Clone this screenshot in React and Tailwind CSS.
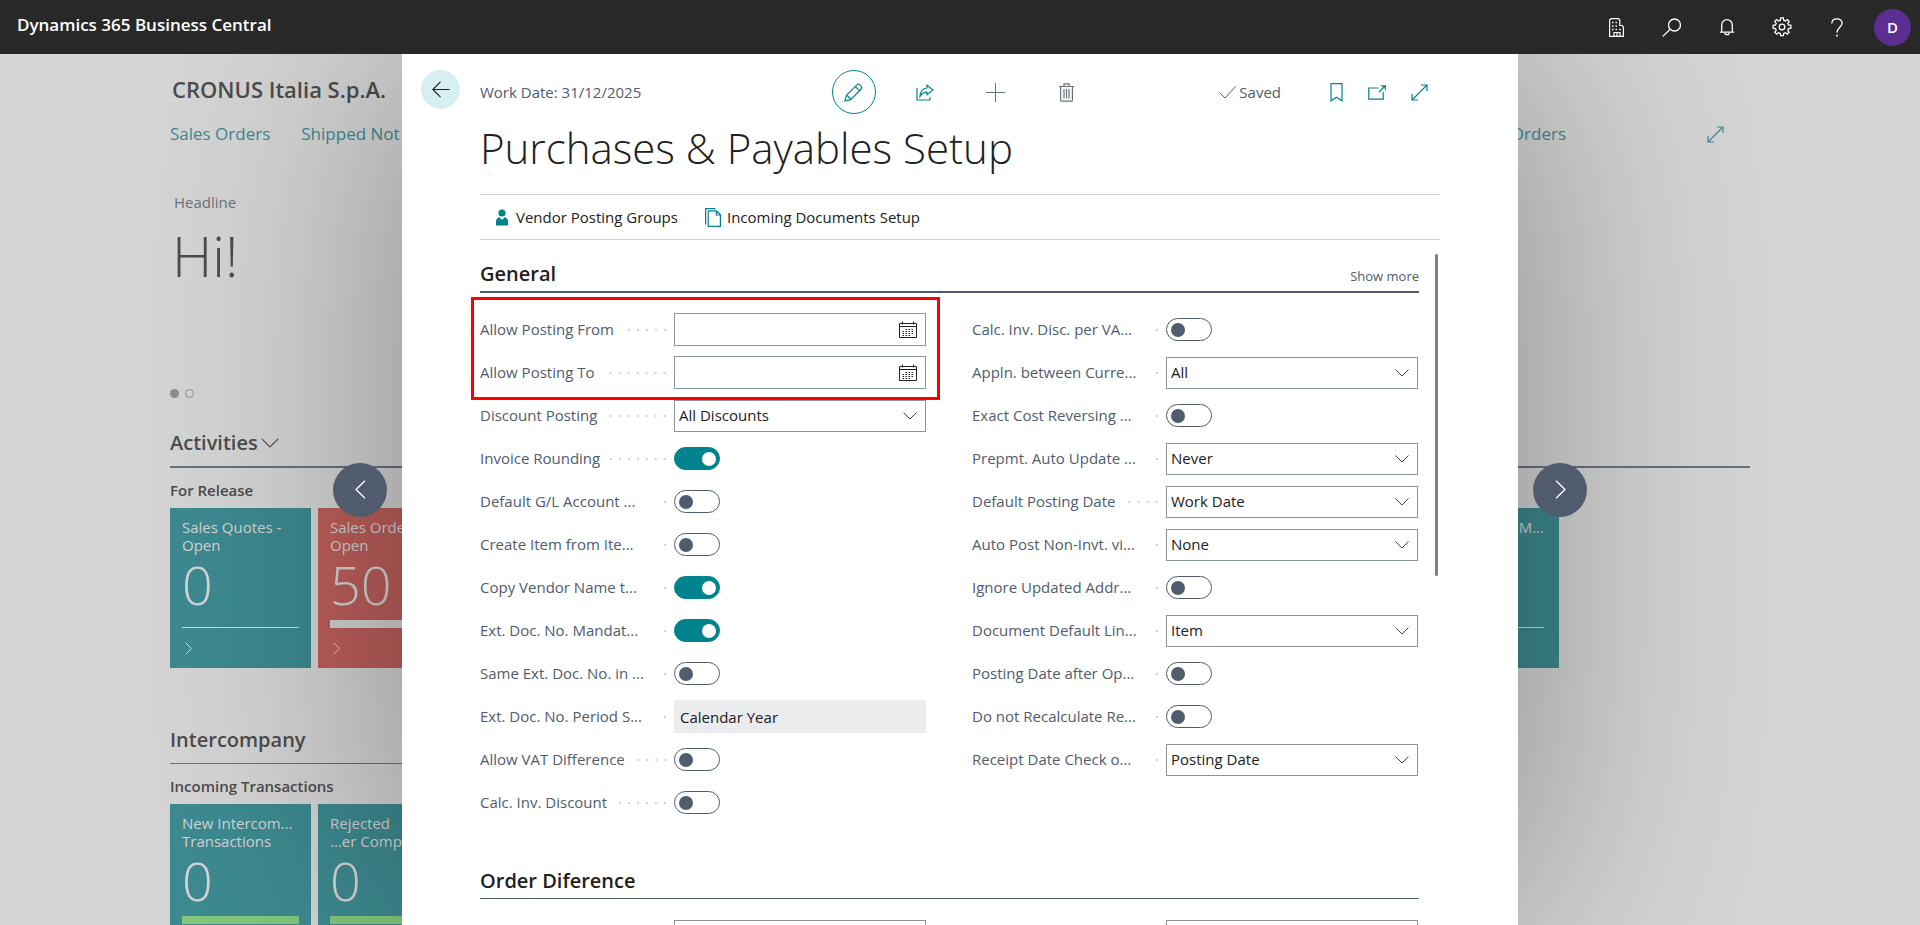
import { useState } from 'react'

const leftFields = [
  { id: 'discount', label: 'Discount Posting', type: 'select', value: 'All Discounts' },
  { id: 'rounding', label: 'Invoice Rounding', type: 'switch', on: true },
  { id: 'gl', label: 'Default G/L Account ...', type: 'switch' },
  { id: 'create', label: 'Create Item from Ite...', type: 'switch' },
  { id: 'copy', label: 'Copy Vendor Name t...', type: 'switch', on: true },
  { id: 'extdoc', label: 'Ext. Doc. No. Mandat...', type: 'switch', on: true },
  { id: 'same', label: 'Same Ext. Doc. No. in ...', type: 'switch' },
  { id: 'period', label: 'Ext. Doc. No. Period S...', type: 'readonly', value: 'Calendar Year' },
  { id: 'vat', label: 'Allow VAT Difference', type: 'switch' },
  { id: 'calc', label: 'Calc. Inv. Discount', type: 'switch' },
]

const rightFields = [
  { id: 'disc', label: 'Calc. Inv. Disc. per VA...', type: 'switch' },
  { id: 'appln', label: 'Appln. between Curre...', type: 'select', value: 'All' },
  { id: 'exact', label: 'Exact Cost Reversing ...', type: 'switch' },
  { id: 'prepmt', label: 'Prepmt. Auto Update ...', type: 'select', value: 'Never' },
  { id: 'defdate', label: 'Default Posting Date', type: 'select', value: 'Work Date' },
  { id: 'autopost', label: 'Auto Post Non-Invt. vi...', type: 'select', value: 'None' },
  { id: 'ignore', label: 'Ignore Updated Addr...', type: 'switch' },
  { id: 'docline', label: 'Document Default Lin...', type: 'select', value: 'Item' },
  { id: 'after', label: 'Posting Date after Op...', type: 'switch' },
  { id: 'recalc', label: 'Do not Recalculate Re...', type: 'switch' },
  { id: 'receipt', label: 'Receipt Date Check o...', type: 'select', value: 'Posting Date' },
]

function Icon({ w = 18, h = 18, sw = 1, className, children }) {
  return (
    <svg width={w} height={h} viewBox={`0 0 ${w} ${h}`} fill="none" stroke="currentColor" strokeWidth={sw} className={className} aria-hidden="true">
      {children}
    </svg>
  )
}

const BuildingIcon = () => (
  <Icon w={15} h={19} sw={1.2}>
    <path d="M.6 18.4V2L2 .6h7.5L10.800 2v5.500h2.200l1.400 1.400v9.500z" />
    <path d="M5 18v-3.500h6V18M8 14.500V18" />
    <path d="M3 4.600h1.500M6.500 4.600H8M3 8h1.500M6.500 8H8M3 11.400h1.500M6.500 11.400H8M10.300 11.400h1.500" strokeWidth="1.500" />
  </Icon>
)

const SearchIcon = () => (
  <Icon w={20} h={19} sw={1.3}>
    <circle cx="12.500" cy="7" r="6" />
    <path d="M8.200 11.200L.8 18.400" />
  </Icon>
)

const BellIcon = () => (
  <Icon w={16} h={18} sw={1.3}>
    <path d="M2.700 14V7a5.300 5.300 0 0110.600 0v7M.8 14.200h14.400" />
    <path d="M5.800 14.500a2.200 2.200 0 004.400 0" />
  </Icon>
)

const GearIcon = () => (
  <Icon w={20} h={20} sw={1.3}>
    <path d="M8.300 3.200l.4-2.300h2.600l.4 2.300 1.700.7 1.900-1.400 1.900 1.900-1.400 1.900.7 1.700 2.400.4v2.800l-2.400.4-.7 1.700 1.400 1.900-1.900 1.900-1.900-1.400-1.700.7-.4 2.300H8.700l-.4-2.300-1.700-.7-1.900 1.400-1.900-1.900 1.400-1.900-.7-1.700-2.400-.4V8.400L3.500 8l.7-1.700-1.400-1.900 1.900-1.900 1.900 1.400z" />
    <circle cx="10" cy="10" r="2.800" />
  </Icon>
)

const HelpIcon = () => (
  <Icon w={12} h={19} sw={1.3}>
    <path d="M.8 5.500C.9 2.600 3.100.8 6 .8s5.100 1.800 5.100 4.500c0 3.700-5.100 4.300-5.100 9.200" />
    <path d="M5.200 17.600h1.600" strokeWidth="1.600" />
  </Icon>
)

const ExpandIcon = () => (
  <Icon w={17} h={17} sw={1.2}>
    <path d="M1 16L16 1M10 1h6v6M1 10v6h6" />
  </Icon>
)

const ChevronDown = ({ className }) => (
  <Icon w={14} h={8} className={className}>
    <path d="M.5.500L7 7 13.500.500" />
  </Icon>
)

const CalendarIcon = ({ className }) => (
  <Icon w={18} h={17} className={className}>
    <path d="M.5 2.500h17v14H.5zM.5 5.500h17M3.500.500v3M14.500.500v3" />
    <path d="M6.500 8.500h9M3.500 10.500h12M3.500 12.500h12M3.500 14.500h9" strokeWidth="1.200" strokeDasharray="1.500 1.500" />
  </Icon>
)

function Switch({ id, on }) {
  const [checked, setChecked] = useState(!!on)
  return (
    <input
      id={id}
      type="checkbox"
      role="switch"
      checked={checked}
      onChange={e => setChecked(e.target.checked)}
      className="flex h-[23px] w-[46px] appearance-none items-center rounded-full border border-[#505c6d] bg-white before:ml-1 before:size-[14px] before:rounded-full before:bg-[#505c6d] before:content-[''] checked:border-[#00838f] checked:bg-[#00838f] checked:before:ml-[27px] checked:before:bg-white"
    />
  )
}

function Control({ field }) {
  if (field.type === 'switch') return <Switch id={field.id} on={field.on} />
  if (field.type === 'readonly') {
    return <input id={field.id} readOnly value={field.value} className="h-[33px] w-full bg-[#ebecee] px-[6px] text-[#212121]" />
  }
  if (field.type === 'date') {
    return (
      <div className="relative">
        <input id={field.id} type="text" className="h-[33px] w-full border border-[#8a93a0] bg-white px-1 text-[#212121]" />
        <CalendarIcon className="pointer-events-none absolute top-2 right-[9px] text-[#212121]" />
      </div>
    )
  }
  return (
    <div className="relative">
      <select id={field.id} className="h-8 w-full appearance-none border border-[#8a93a0] bg-white px-1 text-[#212121]">
        <option>{field.value}</option>
      </select>
      <ChevronDown className="pointer-events-none absolute top-3 right-[9px] text-[#444]" />
    </div>
  )
}

function Field({ field }) {
  const long = field.label.endsWith('...')
  return (
    <div className="flex h-[43px] items-center">
      <div className="flex w-[194px] shrink-0 items-center pr-2">
        <label htmlFor={field.id} className={`whitespace-nowrap ${long ? 'min-w-[178px]' : 'pr-[10px]'}`}>
          {field.label}
        </label>
        {/* dotted leader between the caption and its control */}
        <span className="h-[2px] flex-1 bg-[linear-gradient(to_right,transparent_7px,#d3d3d3_7px)] bg-[length:9px_2px] bg-right bg-repeat-x" />
      </div>
      <div className="min-w-0 flex-1">
        <Control field={field} />
      </div>
    </div>
  )
}

function Tile({ lines, value, bar, color = 'bg-[#3d8b91]', align = '' }) {
  return (
    <a href="#" className={`flex h-40 w-[141px] shrink-0 flex-col px-3 pt-[10px] text-[15px] leading-[18px] text-[#d6d6d6] ${color} ${align}`}>
      {lines.map(l => <span key={l} className="whitespace-nowrap">{l}</span>)}
      <span className="mt-1 mb-1 h-[52px] text-[54px] leading-[52px] font-light">{value}</span>
      <span className="flex h-[14px] items-end">
        <span className={`w-full ${bar}`} />
      </span>
      <Icon w={8} h={13} className="mt-[14px] ml-[3px]">
        <path d="M.8.800l5.700 5.700L.8 12.200" />
      </Icon>
    </a>
  )
}

function RoleCenter() {
  return (
    <div className="mx-[170px] text-[#4d4d4d]" aria-hidden="true">
      <h2 className="mt-5 ml-[2px] text-[22px] leading-[30px] font-semibold">CRONUS Italia S.p.A.</h2>
      <nav className="mt-[17px] flex items-center text-[17px] leading-[26px] text-[#3d8b91]">
        <a href="#" className="mr-[31px]">Sales Orders</a>
        <a href="#">Shipped Not Invoiced</a>
        <a href="#" className="ml-auto mr-[141px]">Orders</a>
        <a href="#" className="mr-[26px]" aria-label="Expand"><ExpandIcon /></a>
      </nav>
      <p className="mt-[43px] ml-1 text-[15px] leading-[24px] text-[#6c737c]">Headline</p>
      <p className="mt-[9px] ml-[2px] text-[56px] leading-[64px] font-light">Hi!</p>
      <div className="mt-[102px] flex gap-[6px]">
        <span className="size-[9px] rounded-full bg-[#8a9099]" />
        <span className="size-[9px] rounded-full border border-[#8a9099]" />
      </div>
      <h3 className="mt-[30px] flex items-center gap-[3px] border-b-2 border-[#6b727d] pb-[9px] text-[20px] leading-[29px] font-semibold">
        Activities
        <Icon w={18} h={10} sw={1.2}><path d="M.800.800L9 9 17.200.800" /></Icon>
      </h3>
      <h4 className="mt-[10px] text-[15px] leading-[24px] font-semibold">For Release</h4>
      <div className="mt-[6px] flex gap-[7px] pr-[191px]">
        <Tile lines={['Sales Quotes -', 'Open']} value="0" bar="h-px bg-[#d6d6d6]" />
        <Tile lines={['Sales Orders -', 'Open']} value="50" bar="h-2 bg-[#d6d6d6]" color="bg-[#bf605c]" />
        <div className="ml-auto">
          <Tile lines={['M...', '\u00a0']} value={'\u00a0'} bar="h-px bg-[#d6d6d6]" align="pr-[15px] text-right" />
        </div>
      </div>
      <div className="mt-[57px] w-1/2">
        <h3 className="border-b border-[#6b727d] pb-[9px] text-[20px] leading-[29px] font-semibold">Intercompany</h3>
        <h4 className="mt-[10px] text-[15px] leading-[24px] font-semibold">Incoming Transactions</h4>
        <div className="mt-[6px] flex gap-[7px]">
          <Tile lines={['New Intercom...', 'Transactions']} value="0" bar="h-2 bg-[#84c77c]" />
          <Tile lines={['Rejected', '...er Comp...']} value="0" bar="h-2 bg-[#84c77c]" />
        </div>
      </div>
    </div>
  )
}

function PageArrow({ label, d }) {
  return (
    <button aria-label={label} className="z-10 flex size-[54px] shrink-0 items-center justify-center rounded-full bg-[#505c6d] text-white">
      <Icon w={11} h={19} sw={1.3}><path d={d} /></Icon>
    </button>
  )
}

function Toolbar() {
  return (
    <div className="flex pt-4">
      <div className="w-[78px] shrink-0 pl-[19px]">
        <button aria-label="Back" className="flex size-[39px] items-center justify-center rounded-full bg-[#d8eff1] text-[#212121]">
          <Icon w={18} h={17} sw={1.2}><path d="M17.500 8.500H1M8.500.800L.8 8.500l7.700 7.700" /></Icon>
        </button>
      </div>
      <div className="grid h-11 flex-1 grid-cols-[1fr_auto_1fr] items-center">
        <span>Work Date: 31/12/2025</span>
        <div className="flex gap-[27px] text-[#00838f]">
          <button aria-label="Edit" className="flex size-11 items-center justify-center rounded-full border border-[#00838f]">
            <Icon w={19} h={19} sw={1.2}>
              <path d="M1 18l1.400-5.600L13 1.800a2 2 0 012.900 0l1.300 1.300a2 2 0 010 2.900L6.600 16.600zM11.300 3.500l4.200 4.200M2.400 12.400q2 0 2.100 2.100 2 0 2.100 2.100" />
            </Icon>
          </button>
          <button aria-label="Share" className="flex size-11 items-center justify-center">
            <Icon w={18} h={17} sw={1.2}>
              <path d="M1 4v12h13v-3" />
              <path d="M11 1.300L17 6l-6 4.700V8.200c-3 0-5 1-7 4.100.3-4.800 2.800-8 7-8.300z" />
            </Icon>
          </button>
          <button aria-label="New" className="flex size-11 items-center justify-center text-[#69717d]">
            <Icon w={19} h={19}><path d="M9.500 0v19M0 9.500h19" /></Icon>
          </button>
          <button aria-label="Delete" className="flex size-11 items-center justify-center text-[#69717d]">
            <Icon w={15} h={19} sw={1.2}>
              <path d="M0 3.500h15M5 3V.8h5V3M1.600 3.500v13.700q0 1 1 1h9.800q1 0 1-1V3.500M5 6v9.500M7.500 6v9.500M10 6v9.500" />
            </Icon>
          </button>
        </div>
        <div className="flex items-center justify-end pr-[12px] text-[#00838f]">
          <span className="mr-[49px] flex items-center gap-[3px] text-[#505c6d]">
            <Icon w={17} h={13}><path d="M.5 6.500l5.500 5.500L16.500.500" /></Icon>
            Saved
          </span>
          <button aria-label="Bookmark" className="mr-[25px]">
            <Icon w={13} h={19} sw={1.2}><path d="M1 .6h11v17.200l-5.500-3.600L1 17.800z" /></Icon>
          </button>
          <button aria-label="Open in new window" className="mr-[25px]">
            <Icon w={18} h={15} sw={1.2}>
              <path d="M10.500 3H.8v11.200h14.400V7M11 7l6-6M13 .800h4.300V5" />
            </Icon>
          </button>
          <button aria-label="Expand"><ExpandIcon /></button>
        </div>
      </div>
    </div>
  )
}

function SetupDialog() {
  return (
    <div role="dialog" aria-label="Purchases & Payables Setup" className="flex h-full max-w-[1116px] flex-1 flex-col overflow-hidden bg-white text-[15px] text-[#505c6d] shadow-[0_0_300px_rgba(0,0,0,0.38)]">
      <div className="pr-[78px]"><Toolbar /></div>
      <div className="flex min-h-0 flex-1 flex-col px-[78px]">
        <h1 className="mt-1 text-[42px] leading-[60px] font-light text-[#212121]">Purchases &amp; Payables Setup</h1>
        <div className="mt-4 flex h-[46px] shrink-0 items-center gap-[27px] border-y border-[#cfd2d6] pl-4 text-[#212121]">
          <button className="flex items-center gap-2">
            <svg width="12" height="17" viewBox="0 0 12 17" fill="#00838f" aria-hidden="true">
              <circle cx="6" cy="4" r="3.600" />
              <path d="M0 16.500v-4Q0 9 3.500 8.300L6 11l2.500-2.700Q12 9 12 12.500v4z" />
            </svg>
            Vendor Posting Groups
          </button>
          <button className="flex items-center gap-[6px]">
            <Icon w={16} h={19} sw={1.2} className="text-[#00838f]">
              <path d="M3.200 2.800h8.300l3.900 4v11.600H3.200zM11.300 3v4h4M.6 16.500V.6h10" />
            </Icon>
            Incoming Documents Setup
          </button>
        </div>
        <div className="mt-[14px] flex min-h-0 flex-1 pr-[2px]">
          <form className="flex-1" onSubmit={e => e.preventDefault()}>
            <div className="flex items-end justify-between border-b-2 border-[#505c6d] pt-[5px] pb-[3px]">
              <h2 className="text-[20px] leading-[29px] font-semibold text-[#212121]">General</h2>
              <button type="button" className="text-[13px] leading-[24px]">Show more</button>
            </div>
            <div className="mt-[15px] grid grid-cols-2 gap-x-[46px] pr-px">
              <div>
                <div className="relative">
                  <Field field={{ id: 'from', label: 'Allow Posting From', type: 'date' }} />
                  <Field field={{ id: 'to', label: 'Allow Posting To', type: 'date' }} />
                  <span className="pointer-events-none absolute -top-[11px] -right-[14px] -bottom-[6px] -left-[9px] z-10 border-3 border-[#ff0000]" />
                </div>
                {leftFields.map(f => <Field key={f.id} field={f} />)}
              </div>
              <div>
                {rightFields.map(f => <Field key={f.id} field={f} />)}
              </div>
            </div>
            <h2 className="mt-[42px] border-b border-[#505c6d] pb-[3px] text-[20px] leading-[29px] font-semibold text-[#212121]">Order Diference</h2>
            <div className="mt-[21px] grid grid-cols-2 gap-x-[46px] pr-px pb-10">
              <div className="pl-[194px]">
                <input type="text" aria-label="Order difference account" className="h-[33px] w-full border border-[#8a93a0]" />
              </div>
              <div className="pl-[194px]">
                <input type="text" aria-label="Order difference limit" className="h-[33px] w-full border border-[#8a93a0]" />
              </div>
            </div>
          </form>
          <div className="ml-4 h-[48%] w-[3px] rounded-full bg-[#808080]" />
        </div>
      </div>
    </div>
  )
}

export default function App() {
  return (
    <div className="flex h-screen flex-col overflow-hidden font-['Open_Sans','Noto_Sans',sans-serif]">
      <header className="z-20 flex h-[54px] shrink-0 items-center justify-between bg-[#282828] pr-[9px] pl-[17px] text-white">
        <a href="#" className="pb-1 text-[17px] font-semibold">Dynamics 365 Business Central</a>
        <div className="flex items-center">
          <button aria-label="Company" className="flex w-[55px] justify-center"><BuildingIcon /></button>
          <button aria-label="Search" className="flex w-[55px] justify-center"><SearchIcon /></button>
          <button aria-label="Notifications" className="flex w-[55px] justify-center"><BellIcon /></button>
          <button aria-label="Settings" className="flex w-[55px] justify-center"><GearIcon /></button>
          <button aria-label="Help" className="flex w-[55px] justify-center"><HelpIcon /></button>
          <button className="ml-[10px] size-[37px] rounded-full bg-[#5c2e91] text-[15px] font-semibold">D</button>
        </div>
      </header>
      <main className="relative min-h-0 flex-1 overflow-hidden bg-[#d6d6d6]">
        <RoleCenter />
        <div className="absolute inset-0 flex items-center justify-center gap-[15px]">
          <PageArrow label="Previous" d="M10 .8L1 9.500l9 8.700" />
          <SetupDialog />
          <PageArrow label="Next" d="M1 .8l9 8.700-9 8.700" />
        </div>
      </main>
    </div>
  )
}
